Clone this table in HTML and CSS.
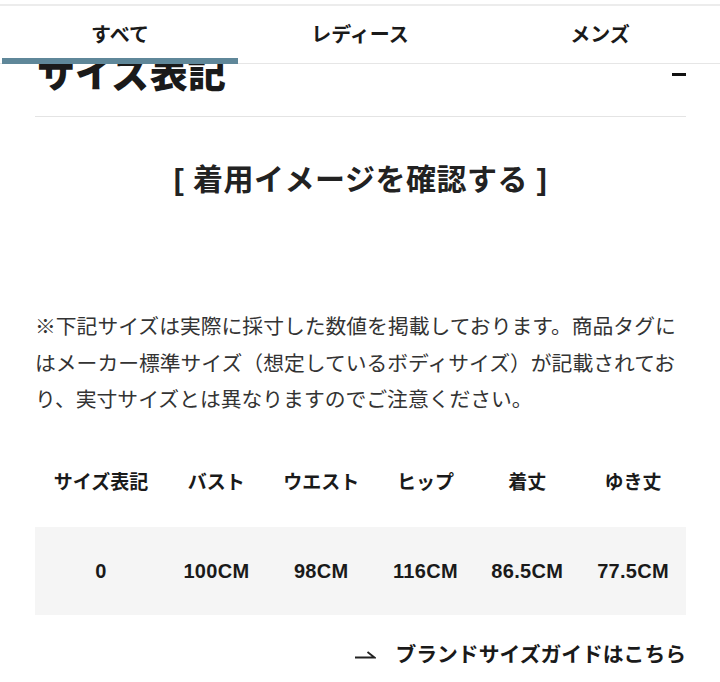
FILE: index.html
```html
<!DOCTYPE html>
<html lang="ja">
<head>
<meta charset="utf-8">
<title>サイズ表記</title>
<link rel="stylesheet" href="styles.css">
</head>
<body>
<nav class="tabs">
  <div class="tabs-strip"></div>
  <div class="tabs-row">
    <div class="tab is-active">すべて</div>
    <div class="tab">レディース</div>
    <div class="tab">メンズ</div>
  </div>
</nav>
<main class="content">
  <div class="section-head">
    <h2 class="section-title">サイズ表記</h2>
    <span class="toggle" aria-label="閉じる"></span>
  </div>
  <div class="image-link">[ 着用イメージを確認する ]</div>
  <p class="note">※下記サイズは実際に採寸した数値を掲載しております。商品タグにはメーカー標準サイズ（想定しているボディサイズ）が記載されており、実寸サイズとは異なりますのでご注意ください。</p>
  <table class="size-table">
    <thead>
      <tr>
        <th>サイズ表記</th>
        <th>バスト</th>
        <th>ウエスト</th>
        <th>ヒップ</th>
        <th>着丈</th>
        <th>ゆき丈</th>
      </tr>
    </thead>
    <tbody>
      <tr>
        <td>0</td>
        <td>100CM</td>
        <td>98CM</td>
        <td>116CM</td>
        <td>86.5CM</td>
        <td>77.5CM</td>
      </tr>
    </tbody>
  </table>
  <div class="guide">
    <a class="guide-link" href="#">
      <svg class="harpoon" width="21" height="12" viewBox="0 0 21 12" aria-hidden="true"><path d="M0 9.5H19.5L12.5 4" fill="none" stroke="#222" stroke-width="1.8" stroke-linejoin="miter"/></svg>
      <span>ブランドサイズガイドはこちら</span>
    </a>
  </div>
</main>
</body>
</html>
```
FILE: styles.css
```css
* { box-sizing: border-box; }
html, body { margin: 0; padding: 0; background: #fff; }
body {
  font-family: "Liberation Sans", "Noto Sans CJK JP", sans-serif;
  color: #222;
  width: 720px;
  height: 682px;
  overflow: hidden;
}
.tabs {
  position: fixed;
  top: 0;
  left: 0;
  width: 720px;
  background: #fff;
  z-index: 10;
}
.tabs-strip {
  height: 6px;
  border-top: 4px solid #fff;
  background: #ececec;
}
.tabs-row {
  display: flex;
  height: 58px;
  border-bottom: 1px solid #e6e6e6;
}
.tab {
  position: relative;
  flex: 1;
  display: flex;
  align-items: center;
  justify-content: center;
  padding-bottom: 2px;
  font-size: 20px;
  font-weight: 700;
  color: #1a1a1a;
}
.tab.is-active::after {
  content: "";
  position: absolute;
  left: 2px;
  right: 2px;
  bottom: -1px;
  height: 6px;
  background: #5f8799;
}
.content {
  margin: 0 34px 0 35px;
  padding-top: 52px;
}
.section-head {
  display: flex;
  align-items: center;
  justify-content: space-between;
  height: 65px;
  padding-bottom: 22px;
  border-bottom: 1px solid #e4e4e4;
}
.section-title {
  margin: 3px 0 0 2px;
  font-size: 38px;
  line-height: 43px;
  font-weight: 900;
  color: #1a1a1a;
}
.toggle {
  width: 14px;
  height: 3px;
  background: #111;
  margin-top: 2px;
}
.image-link {
  margin-top: 43px;
  text-align: center;
  font-size: 30px;
  line-height: 40px;
  font-weight: 700;
  letter-spacing: 0.5px;
  color: #222;
}
.note {
  margin: 109px 0 0;
  font-size: 20.8px;
  line-height: 36.5px;
  color: #333;
}
.size-table {
  width: 100%;
  margin-top: 20px;
  border-collapse: collapse;
}
.size-table th,
.size-table td {
  padding: 30px 10px;
  font-size: 19px;
  line-height: 28px;
  font-weight: 700;
  text-align: center;
  color: #1a1a1a;
  white-space: nowrap;
}
.size-table td { font-size: 20px; letter-spacing: 0.3px; }
.size-table tbody tr { background: #f5f5f5; }
.guide {
  margin-top: 26px;
  display: flex;
  justify-content: flex-end;
}
.guide-link {
  display: flex;
  align-items: center;
  gap: 19px;
  text-decoration: none;
  color: #1a1a1a;
  font-size: 20.8px;
  line-height: 28px;
  font-weight: 700;
}
.harpoon { display: block; margin-top: -1px; }
```
